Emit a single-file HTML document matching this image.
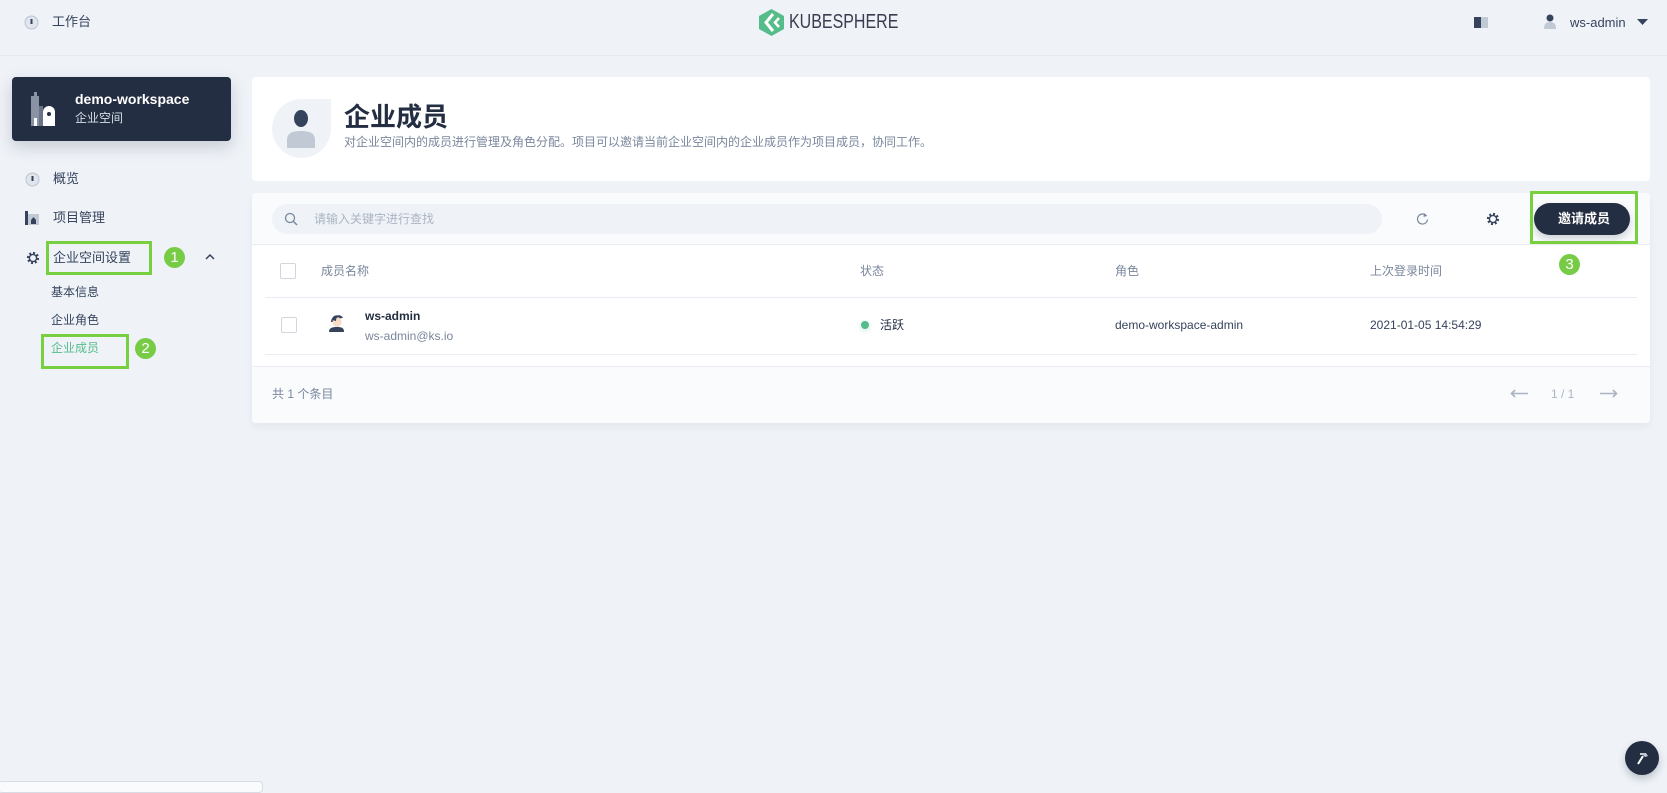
<!DOCTYPE html>
<html><head><meta charset="utf-8"><style>
*{margin:0;padding:0;box-sizing:border-box}
body{width:1667px;height:787px;background:#eff3f8;font-family:"Liberation Sans","Noto Sans CJK SC",sans-serif;color:#242e42;position:relative;overflow:hidden;font-size:13px}
.a{position:absolute}
.t{position:absolute;white-space:nowrap;line-height:1}
.box{position:absolute;border:3px solid #78d041}
.badge{position:absolute;width:21px;height:21px;border-radius:50%;background:#78cc45;color:#fff;font-size:15px;text-align:center;line-height:21px}
.grey{color:#79879c}
.line{position:absolute;height:1px;background:#e9edf3}
.cb{position:absolute;width:16px;height:16px;border:1px solid #d1d7e0;border-radius:2px;background:#fff}
</style></head><body>
<div class="a" style="left:0;top:55px;width:1667px;height:1px;background:#e3e9ef"></div>
<svg class="a" style="left:24px;top:15px" width="15" height="15"><circle cx="7.5" cy="7.5" r="6.5" fill="#e1e6ee" stroke="#bcc4d0"/><path d="M7.5 4v5" stroke="#36435c" stroke-width="2"/></svg>
<div class="t" style="left:52px;top:15px;font-size:13px;color:#36435c">工作台</div>
<svg class="a" style="left:759px;top:9px" width="25" height="27" viewBox="0 0 25 27"><path d="M12.5 0L25 7v13l-12.5 7L0 20V7z" fill="#55bc8a"/><path d="M14 5l-7 8.5 7 8.5" stroke="#fff" stroke-width="3" fill="none"/><path d="M20 9l-4 4.5 4 4.5" stroke="#fff" stroke-width="2.5" fill="none"/></svg>
<div class="t" style="left:789px;top:12px;font-size:20px;color:#3d3b4f;transform:scaleX(0.8);transform-origin:left">KUBESPHERE</div>
<svg class="a" style="left:1474px;top:17px" width="14" height="11"><rect x="0" y="0" width="7" height="11" fill="#36435c"/><rect x="7" y="0" width="7" height="11" fill="#c1c9d4"/></svg>
<svg class="a" style="left:1544px;top:14px" width="12" height="16"><circle cx="6" cy="4" r="3.5" fill="#36435c"/><path d="M0 15c0-5 2-7 6-7s6 2 6 7z" fill="#c1c9d4"/></svg>
<div class="t" style="left:1570px;top:16px;font-size:13px;color:#36435c">ws-admin</div>
<svg class="a" style="left:1637px;top:19px" width="11" height="7"><path d="M0 0h11L5.5 6z" fill="#36435c"/></svg>
<div class="a" style="left:12px;top:77px;width:219px;height:64px;background:#242e42;border-radius:4px;box-shadow:0 6px 16px rgba(36,46,66,.2)"></div>
<svg class="a" style="left:31px;top:92px" width="24" height="34"><rect x="0" y="4" width="8" height="30" fill="#8a93a3"/><rect x="3" y="0" width="3" height="5" fill="#8a93a3"/><rect x="8" y="14" width="4" height="20" fill="#6b7487"/><path d="M12 34V20a6 6 0 0 1 12 0v14z" fill="#fff"/><circle cx="18" cy="22" r="2" fill="#242e42"/><rect x="3" y="26" width="3" height="8" fill="#fff"/></svg>
<div class="t" style="left:75px;top:92px;font-size:14px;font-weight:bold;color:#fff">demo-workspace</div>
<div class="t" style="left:75px;top:112px;font-size:12px;color:#d5dee7">企业空间</div>
<svg class="a" style="left:25px;top:172px" width="15" height="15"><circle cx="7.5" cy="7.5" r="6.5" fill="#e1e6ee" stroke="#bcc4d0"/><path d="M7.5 4v5" stroke="#36435c" stroke-width="2"/></svg>
<div class="t" style="left:53px;top:172px;font-size:13px;color:#36435c">概览</div>
<svg class="a" style="left:25px;top:211px" width="14" height="14"><rect x="0" y="0" width="3" height="14" fill="#36435c"/><rect x="3" y="3" width="11" height="11" fill="#c1c9d4"/><path d="M6 13V9l2.5-3 2.5 3v4z" fill="#36435c"/></svg>
<div class="t" style="left:53px;top:211px;font-size:13px;color:#36435c">项目管理</div>
<svg class="a" style="left:26px;top:251px" width="14" height="14" viewBox="0 0 14 14"><circle cx="7" cy="7" r="5" fill="none" stroke="#36435c" stroke-width="2.2" stroke-dasharray="2 1.9"/><circle cx="7" cy="7" r="3.6" fill="none" stroke="#36435c" stroke-width="1.4"/></svg>
<div class="t" style="left:53px;top:251px;font-size:13px;color:#36435c">企业空间设置</div>
<div class="box" style="left:46px;top:241px;width:106px;height:34px"></div>
<div class="badge" style="left:164px;top:247px">1</div>
<svg class="a" style="left:205px;top:253px" width="10" height="7"><path d="M1 6l4-4 4 4" stroke="#36435c" stroke-width="1.5" fill="none"/></svg>
<div class="t" style="left:51px;top:286px;font-size:12px;color:#36435c">基本信息</div>
<div class="t" style="left:51px;top:314px;font-size:12px;color:#36435c">企业角色</div>
<div class="t" style="left:51px;top:342px;font-size:12px;color:#55bc8a">企业成员</div>
<div class="box" style="left:41px;top:334px;width:88px;height:35px"></div>
<div class="badge" style="left:135px;top:338px">2</div>
<div class="a" style="left:252px;top:77px;width:1398px;height:104px;background:#fff;border-radius:4px"></div>
<div class="a" style="left:272px;top:99px;width:59px;height:59px;background:#eff3f8;border-radius:50% 0 50% 50%"></div>
<svg class="a" style="left:287px;top:110px" width="28" height="38"><ellipse cx="14" cy="8.5" rx="7" ry="8.5" fill="#36435c"/><path d="M0 38v-8c0-6 4-9 14-9s14 3 14 9v8z" fill="#c1c9d4"/></svg>
<div class="t" style="left:344px;top:104px;font-size:26px;font-weight:bold;color:#242e42">企业成员</div>
<div class="t" style="left:344px;top:136px;font-size:12px;color:#79879c">对企业空间内的成员进行管理及角色分配。项目可以邀请当前企业空间内的企业成员作为项目成员，协同工作。</div>
<div class="a" style="left:252px;top:193px;width:1398px;height:230px;background:#fff;border-radius:4px;box-shadow:0 4px 8px rgba(36,46,66,.05)"></div>
<div class="a" style="left:252px;top:193px;width:1398px;height:52px;background:#f9fbfd;border-radius:4px 4px 0 0;border-bottom:1px solid #e9edf3"></div>
<div class="a" style="left:272px;top:204px;width:1110px;height:30px;background:#eff3f8;border-radius:15px"></div>
<svg class="a" style="left:284px;top:212px" width="14" height="14"><circle cx="6" cy="6" r="4.5" stroke="#79879c" stroke-width="1.3" fill="none"/><path d="M9.5 9.5l3.5 3.5" stroke="#79879c" stroke-width="1.5"/></svg>
<div class="t" style="left:314px;top:213px;font-size:12px;color:#abb4c2">请输入关键字进行查找</div>
<svg class="a" style="left:1416px;top:212px" width="13" height="13"><path d="M10.5 4A5 5 0 1 0 11.5 7.5" stroke="#79879c" stroke-width="1.2" fill="none"/><path d="M8 1l3 3-3.5 1z" fill="#79879c"/></svg>
<svg class="a" style="left:1486px;top:212px" width="14" height="14" viewBox="0 0 14 14"><circle cx="7" cy="7" r="5" fill="none" stroke="#36435c" stroke-width="2.2" stroke-dasharray="2 1.9"/><circle cx="7" cy="7" r="3.6" fill="none" stroke="#36435c" stroke-width="1.4"/></svg>
<div class="a" style="left:1534px;top:203px;width:96px;height:32px;background:#242e42;border-radius:16px;box-shadow:0 4px 8px rgba(36,46,66,.2)"></div>
<div class="t" style="left:1558px;top:212px;font-size:13px;font-weight:bold;color:#fff">邀请成员</div>
<div class="box" style="left:1530px;top:191px;width:108px;height:53px"></div>
<div class="badge" style="left:1559px;top:254px">3</div>
<div class="cb" style="left:280px;top:263px"></div>
<div class="t grey" style="left:321px;top:265px;font-size:12px">成员名称</div>
<div class="t grey" style="left:860px;top:265px;font-size:12px">状态</div>
<div class="t grey" style="left:1115px;top:265px;font-size:12px">角色</div>
<div class="t grey" style="left:1370px;top:265px;font-size:12px">上次登录时间</div>
<div class="line" style="left:265px;top:297px;width:1372px"></div>
<div class="cb" style="left:281px;top:317px"></div>
<svg class="a" style="left:328px;top:312px" width="16" height="20"><path d="M3 10c0-7 10-9 12-4-3 0-5 1-6 4z" fill="#36435c"/><ellipse cx="9" cy="10" rx="4.5" ry="5" fill="#f7dcc8"/><path d="M4 8c0-5 6-6 8-3-3 0-4 1-4 4z" fill="#36435c"/><path d="M1 20c0-4 3-5 8-5s7 1 7 5z" fill="#36435c"/></svg>
<div class="t" style="left:365px;top:310px;font-size:12px;font-weight:bold;color:#242e42">ws-admin</div>
<div class="t grey" style="left:365px;top:330px;font-size:12px">ws-admin@ks.io</div>
<div class="a" style="left:861px;top:321px;width:8px;height:8px;border-radius:50%;background:#55bc8a;box-shadow:0 2px 6px rgba(85,188,138,.3)"></div>
<div class="t" style="left:880px;top:319px;font-size:12px;color:#242e42">活跃</div>
<div class="t" style="left:1115px;top:319px;font-size:12px;color:#36435c">demo-workspace-admin</div>
<div class="t" style="left:1370px;top:319px;font-size:12px;color:#36435c">2021-01-05 14:54:29</div>
<div class="line" style="left:265px;top:354px;width:1372px"></div>
<div class="a" style="left:252px;top:366px;width:1398px;height:57px;background:#f9fbfd;border-top:1px solid #e9edf3;border-radius:0 0 4px 4px"></div>
<div class="t grey" style="left:272px;top:388px;font-size:12px">共 1 个条目</div>
<svg class="a" style="left:1510px;top:389px" width="18" height="9"><path d="M18 4.5H2M5 1L1.5 4.5 5 8" stroke="#abb4c2" stroke-width="1.6" fill="none"/></svg>
<div class="t grey" style="left:1551px;top:388px;font-size:12px;color:#abb4c2">1 / 1</div>
<svg class="a" style="left:1600px;top:389px" width="18" height="9"><path d="M0 4.5h16M13 1l3.5 3.5L13 8" stroke="#abb4c2" stroke-width="1.6" fill="none"/></svg>
<div class="a" style="left:-2px;top:781px;width:265px;height:12px;border:1px solid #d8dde5;border-radius:4px;background:#f9fbfd"></div>
<div class="a" style="left:1625px;top:741px;width:34px;height:34px;border-radius:50%;background:#242e42;box-shadow:0 4px 8px rgba(36,46,66,.25)"></div>
<svg class="a" style="left:1634px;top:750px" width="16" height="16"><path d="M4 14l5-8" stroke="#fff" stroke-width="2"/><path d="M6 3l6 0 2 3-3 1-2-2-3 0z" fill="#c1c9d4"/></svg>
</body></html>
